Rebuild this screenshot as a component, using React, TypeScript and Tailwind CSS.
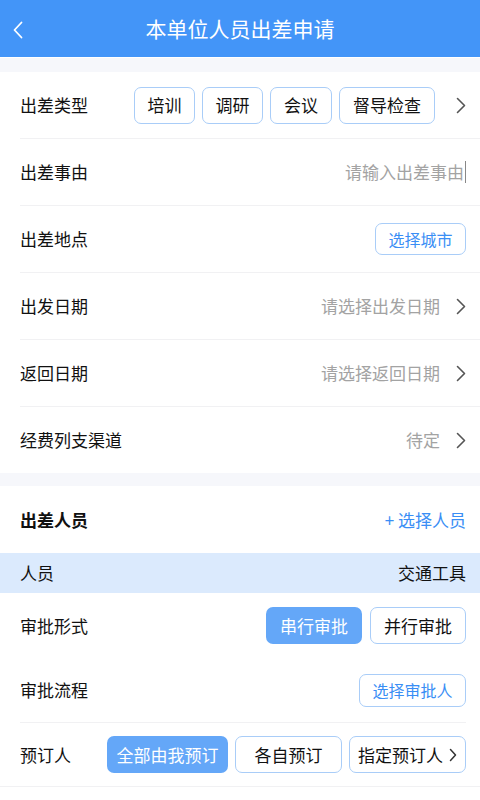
import React from "react";

const font = { fontFamily: '"Noto Sans CJK SC", "Noto Sans", sans-serif' };

function Chevron({ className = "" }: { className?: string }) {
  return (
    <svg width="10" height="17" viewBox="0 0 10 17" className={className}>
      <polyline points="1.5,1.5 8.5,8.5 1.5,15.5" fill="none" stroke="#555" strokeWidth="1.6" strokeLinecap="round" strokeLinejoin="round" />
    </svg>
  );
}

function Row({ label, children, last = false }: { label: string; children?: React.ReactNode; last?: boolean }) {
  return (
    <div className={`ml-5 flex items-center justify-between pr-[14px] ${last ? "h-[66px]" : "h-[67px] border-b border-[#f1f1f3]"}`}>
      <span className="text-[17px] text-[#111]">{label}</span>
      <div className="flex items-center">{children}</div>
    </div>
  );
}

function Tag({ text, w }: { text: string; w: string }) {
  return (
    <div className={`flex h-[37px] items-center justify-center rounded-[7px] border border-[#a9cdf8] text-[17px] text-[#111] ${w}`}>
      {text}
    </div>
  );
}

export default function App() {
  return (
    <div style={font} className="w-[480px] h-[800px] overflow-hidden bg-white">
      <div className="relative flex h-[57px] items-center justify-center bg-[#4395f8]">
        <svg width="12" height="18" viewBox="0 0 12 18" className="absolute left-[12px] top-[21px]">
          <polyline points="9.5,1.5 2.5,9 9.5,16.5" fill="none" stroke="#fff" strokeWidth="1.8" strokeLinecap="round" strokeLinejoin="round" />
        </svg>
        <span className="text-[21px] text-white">本单位人员出差申请</span>
      </div>
      <div className="h-px bg-white" />
      <div className="h-[14px] bg-[#f6f7fb]" />

      <div className="bg-white">
        <Row label="出差类型">
          <div className="flex gap-[7px]">
            <Tag text="培训" w="w-[61px]" />
            <Tag text="调研" w="w-[61px]" />
            <Tag text="会议" w="w-[62px]" />
            <Tag text="督导检查" w="w-[96px]" />
          </div>
          <Chevron className="ml-[21px]" />
        </Row>
        <Row label="出差事由">
          <span className="text-[17px] text-[#a3a3a3]">请输入出差事由</span>
          <span className="ml-px h-[22px] w-px bg-[#888]" />
        </Row>
        <Row label="出差地点">
          <div className="flex h-[32px] w-[91px] items-center justify-center rounded-[7px] border border-[#a9cdf8] text-[16px] text-[#3a8ef5]">
            选择城市
          </div>
        </Row>
        <Row label="出发日期">
          <span className="text-[17px] text-[#a3a3a3]">请选择出发日期</span>
          <Chevron className="ml-[16px]" />
        </Row>
        <Row label="返回日期">
          <span className="text-[17px] text-[#a3a3a3]">请选择返回日期</span>
          <Chevron className="ml-[16px]" />
        </Row>
        <Row label="经费列支渠道" last>
          <span className="text-[17px] text-[#a3a3a3]">待定</span>
          <Chevron className="ml-[16px]" />
        </Row>
      </div>

      <div className="h-[13px] bg-[#f6f7fb]" />

      <div className="bg-white">
        <div className="flex h-[67px] items-center justify-between pl-5 pr-[14px]">
          <span className="text-[17px] font-bold text-[#111]">出差人员</span>
          <span className="text-[17px] text-[#3a8ef5]">+ 选择人员</span>
        </div>
        <div className="flex h-[40px] items-center justify-between bg-[#dbeafd] pl-5 pr-[14px]">
          <span className="text-[17px] text-[#111]">人员</span>
          <span className="text-[17px] text-[#111]">交通工具</span>
        </div>
        <div className="flex h-[65px] items-center justify-between pl-5 pr-[14px]">
          <span className="text-[17px] text-[#111]">审批形式</span>
          <div className="flex gap-[8px]">
            <div className="flex h-[37px] w-[96px] items-center justify-center rounded-[7px] bg-[#64a7f8] text-[17px] text-white">串行审批</div>
            <div className="flex h-[37px] w-[96px] items-center justify-center rounded-[7px] border border-[#a9cdf8] text-[17px] text-[#111]">并行审批</div>
          </div>
        </div>
        <div className="ml-5 mr-[14px] flex h-[65px] items-center justify-between border-b border-[#f1f1f3]">
          <span className="text-[17px] text-[#111]">审批流程</span>
          <div className="flex h-[33px] w-[107px] items-center justify-center rounded-[7px] border border-[#a9cdf8] text-[16px] text-[#3a8ef5]">选择审批人</div>
        </div>
        <div className="flex h-[64px] items-center justify-between border-b border-[#f1f1f3] pl-5 pr-[14px]">
          <span className="text-[17px] text-[#111]">预订人</span>
          <div className="flex gap-[7px]">
            <div className="flex h-[37px] w-[121px] items-center justify-center rounded-[7px] bg-[#64a7f8] text-[17px] text-white">全部由我预订</div>
            <div className="flex h-[37px] w-[107px] items-center justify-center rounded-[7px] border border-[#a9cdf8] text-[17px] text-[#111]">各自预订</div>
            <div className="flex h-[37px] w-[117px] items-center justify-center gap-[6px] rounded-[7px] border border-[#a9cdf8] text-[17px] text-[#111]">
              指定预订人
              <svg width="8" height="14" viewBox="0 0 8 14">
                <polyline points="1.5,1.5 6.5,7 1.5,12.5" fill="none" stroke="#333" strokeWidth="1.5" strokeLinecap="round" strokeLinejoin="round" />
              </svg>
            </div>
          </div>
        </div>
      </div>
    </div>
  );
}
